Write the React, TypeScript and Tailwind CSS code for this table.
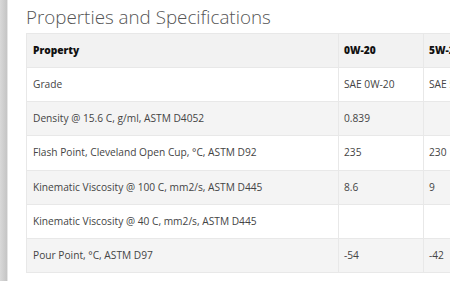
const rows: [string, string, string][] = [
  ['Grade', 'SAE 0W-20', 'SAE 5W-20'],
  ['Density @ 15.6 C, g/ml, ASTM D4052', '0.839', ''],
  ['Flash Point, Cleveland Open Cup, °C, ASTM D92', '235', '230'],
  ['Kinematic Viscosity @ 100 C, mm2/s, ASTM D445', '8.6', '9'],
  ['Kinematic Viscosity @ 40 C, mm2/s, ASTM D445', '', ''],
  ['Pour Point, °C, ASTM D97', '-54', '-42'],
];

export default function App() {
  return (
    <div className="flex h-[281px] w-[450px] overflow-hidden bg-white font-['Open_Sans',sans-serif]">
      {/* side rail */}
      <div className="w-[8px] shrink-0 bg-gradient-to-r from-[#d9d9d9] to-[#c4c4c4] border-r border-[#e6e6e6]" />

      <div className="flex-1 pl-[18px] pt-[3px]">
        <h2 className="text-[18.8px] font-light leading-[28px] text-[#555] whitespace-nowrap">
          Properties and Specifications
        </h2>

        <table className="mt-[2px] w-[600px] table-fixed border-collapse text-[10.2px] text-[#444]">
          <colgroup>
            <col className="w-[312px]" />
            <col className="w-[85px]" />
            <col className="w-[85px]" />
            <col />
          </colgroup>
          <thead>
            <tr className="h-[34px] bg-[#f2f2f2]">
              <th className="border border-[#e8e8e8] pl-[6px] text-left font-extrabold text-[#111]">Property</th>
              <th className="border border-[#e8e8e8] pl-[5px] text-left font-extrabold text-[#111]">0W-20</th>
              <th className="border border-[#e8e8e8] pl-[5px] text-left font-extrabold text-[#111]">5W-20</th>
              <th className="border border-[#e8e8e8]" />
            </tr>
          </thead>
          <tbody>
            {rows.map((r, i) => (
              <tr key={i} className={i % 2 === 0 ? 'h-[34.2px] bg-white' : 'h-[34.2px] bg-[#f4f4f4]'}>
                <td className="border border-[#e8e8e8] pl-[6px] whitespace-nowrap">{r[0]}</td>
                <td className="border border-[#e8e8e8] pl-[5px] whitespace-nowrap">{r[1]}</td>
                <td className="border border-[#e8e8e8] pl-[5px] whitespace-nowrap">{r[2]}</td>
                <td className="border border-[#e8e8e8]" />
              </tr>
            ))}
          </tbody>
        </table>
      </div>
    </div>
  );
}
